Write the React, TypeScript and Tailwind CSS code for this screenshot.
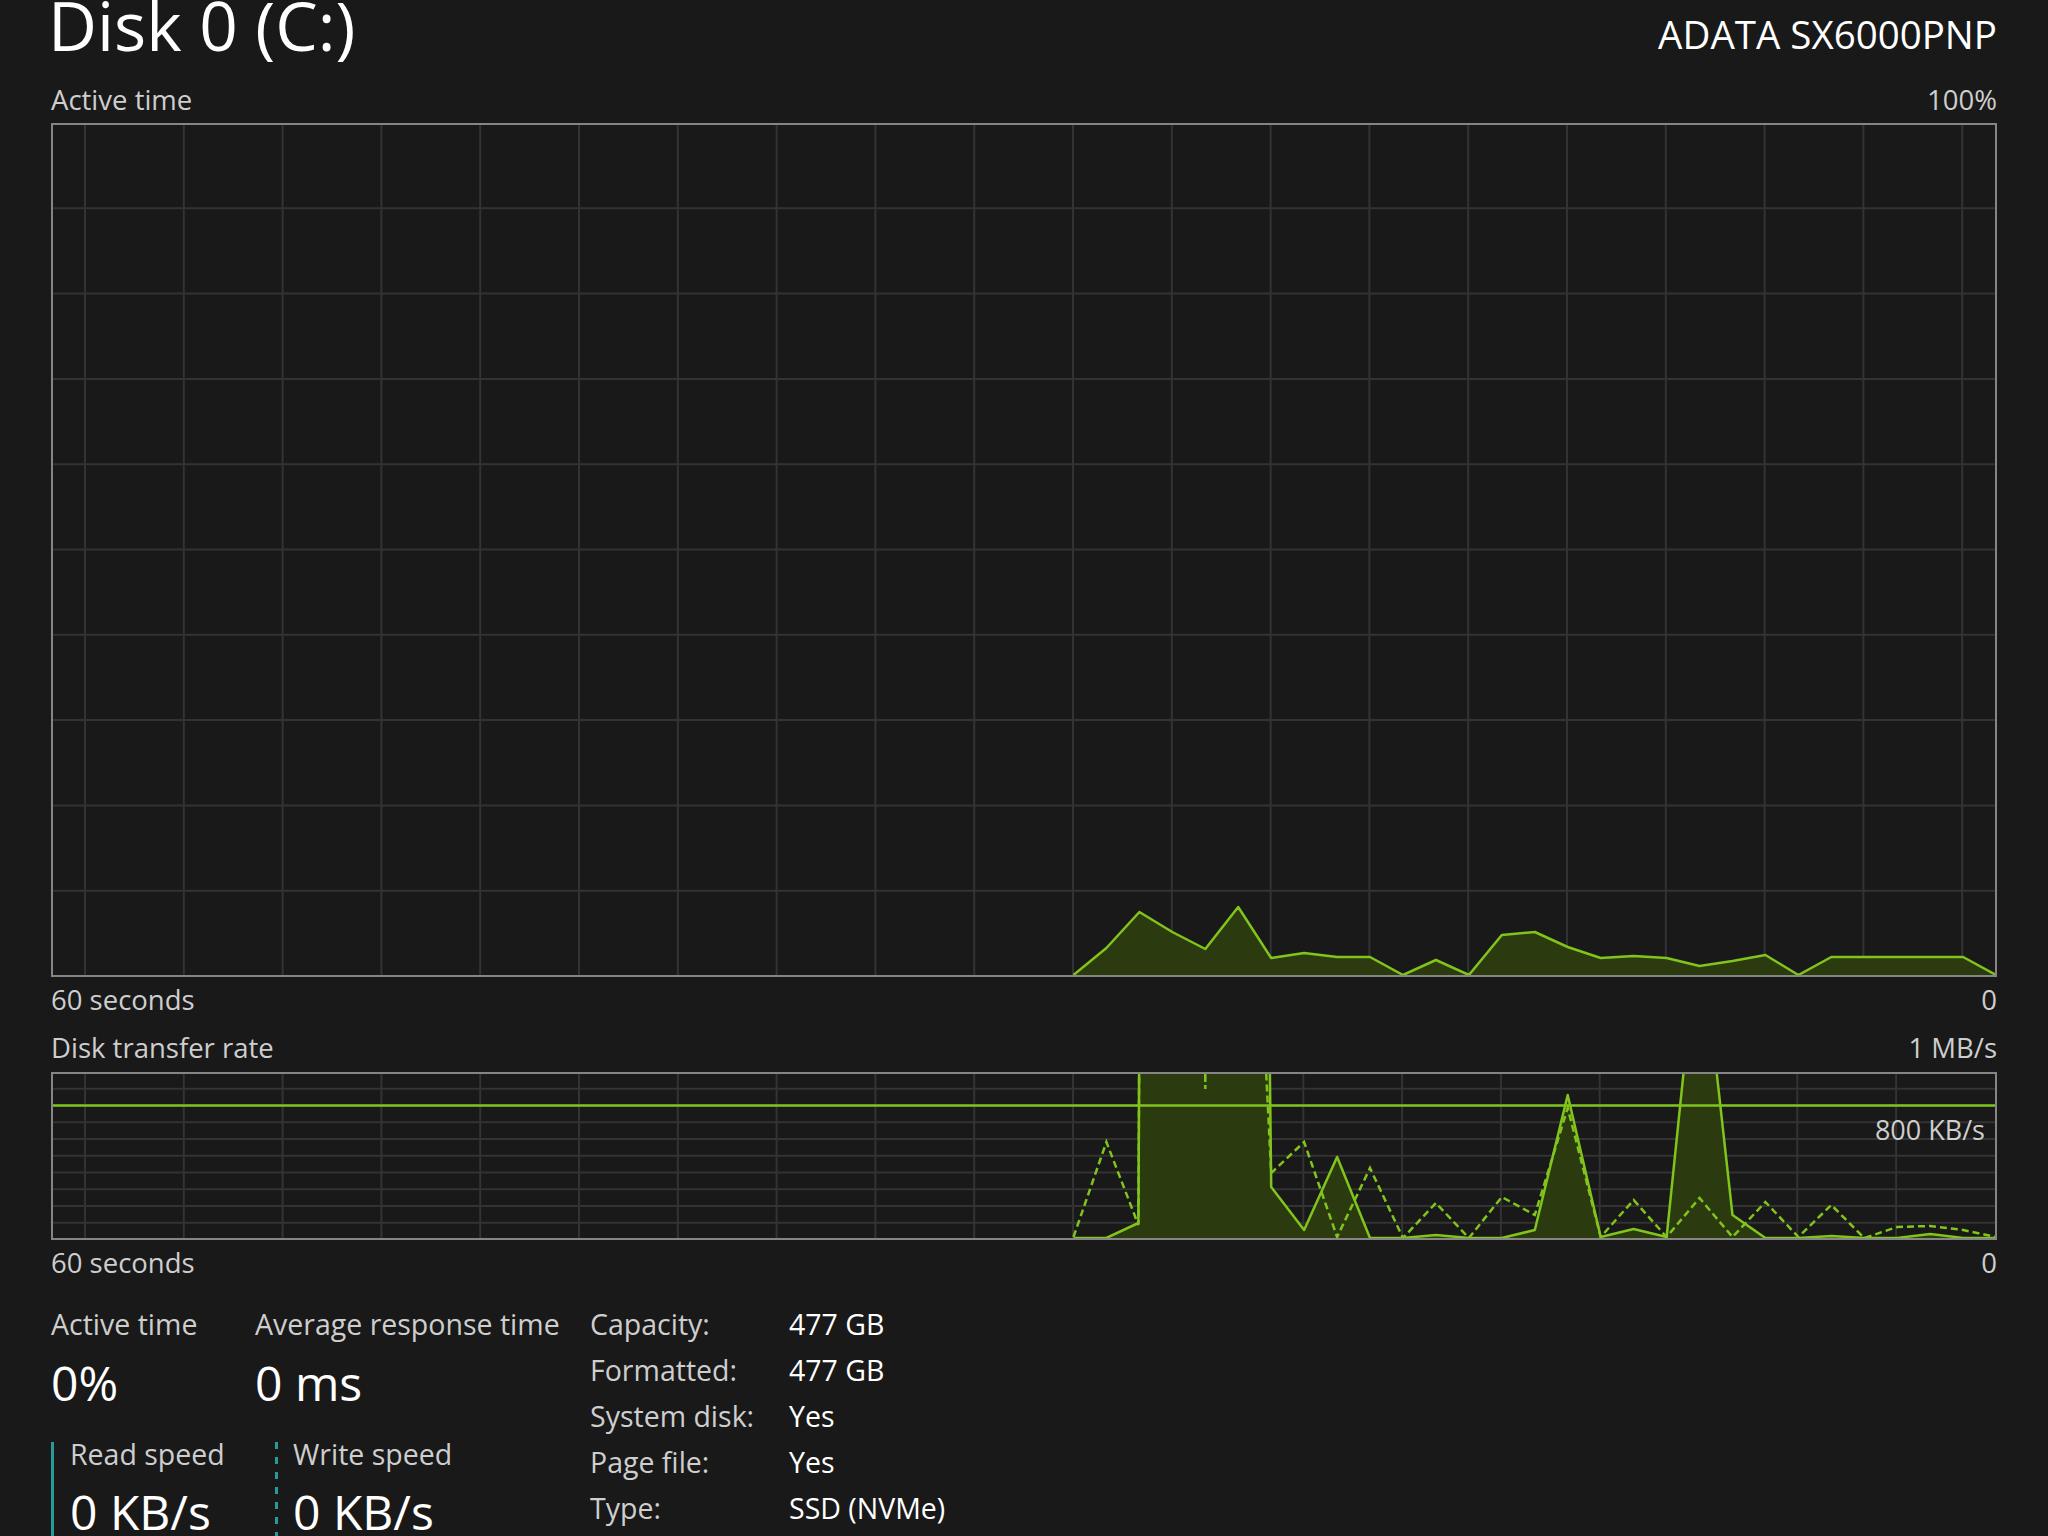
import React from 'react';

const LINE = '#80c41c';
const FILL = '#2c3a10';
const GRID = '#333333';

// x of sample i (60 samples across the chart)
const sx = (i: number, dx = 0) => 52 + i * 32.95 + dx;

type Pt = [number, number, number?];

const toPath = (pts: Pt[], top: number) =>
  pts.map((p, k) => `${k ? 'L' : 'M'}${sx(p[0], p[2] ?? 0).toFixed(1)} ${top + p[1]}`).join(' ');

// active time, y relative to 125
const active: Pt[] = [
  [31, 850], [32, 823], [33, 787], [34, 807], [35, 824], [36, 782], [37, 833], [38, 828],
  [39, 832], [40, 832], [41, 850], [42, 835], [43, 850], [44, 810], [45, 807], [46, 822],
  [47, 833], [48, 831], [49, 833], [50, 841], [51, 836], [52, 830], [53, 850], [54, 832],
  [55, 832], [56, 832], [57, 832], [58, 832], [59, 850],
];

// transfer rate, y relative to 1073
const read: Pt[] = [
  [31, 165], [32, 165], [33, 150, -1], [33, -60], [36, -60], [37, -60, -2], [37, 114], [38, 157],
  [39, 84], [40, 165], [41, 165], [42, 162], [43, 165], [44, 165], [45, 157], [46, 22], [47, 164],
  [48, 156], [49, 164], [50, -155], [51, 142], [52, 165], [53, 165], [54, 163], [55, 165],
  [56, 165], [57, 161], [58, 165], [59, 165],
];

const write: Pt[] = [
  [31, 164], [32, 69], [33, 152, -1], [33, -60], [34, -60], [35, -400, -1], [35, 16], [35, -400, 1],
  [36, -60], [37, -60, -8], [37, 100], [38, 69], [39, 164], [40, 95], [41, 165], [42, 130],
  [43, 165], [44, 124], [45, 142], [46, 35], [47, 164], [48, 127], [49, 164], [50, 125],
  [51, 164], [52, 129], [53, 164], [54, 132], [55, 165], [56, 154], [57, 153], [58, 157], [59, 164],
];

function LabelRow({ left, right }: { left: string; right: string }) {
  return (
    <div className="flex justify-between text-[27.5px] leading-[34px]">
      <span>{left}</span>
      <span>{right}</span>
    </div>
  );
}

function ActiveChart() {
  const vlines = Array.from({ length: 20 }, (_, k) => 85 + k * 98.8);
  const hlines = Array.from({ length: 9 }, (_, j) => 123 + (j + 1) * 85.3);
  const line = toPath(active, 125);
  const area = `${line} L${sx(59)} 976 L${sx(31)} 976 Z`;
  return (
    <svg className="block h-full w-full overflow-hidden" viewBox="53 125 1942 850" preserveAspectRatio="none">
      {vlines.map((x) => (
        <line key={x} x1={x} x2={x} y1={120} y2={980} stroke={GRID} strokeWidth={2} />
      ))}
      {hlines.map((y) => (
        <line key={y} x1={50} x2={2000} y1={y} y2={y} stroke={GRID} strokeWidth={2} />
      ))}
      <path d={area} fill={FILL} />
      <path d={line} fill="none" stroke={LINE} strokeWidth={2.5} strokeLinejoin="round" />
    </svg>
  );
}

function TransferChart() {
  const vlines = [
    ...Array.from({ length: 11 }, (_, k) => 85 + k * 98.8),
    ...Array.from({ length: 8 }, (_, k) => 1204.5 + k * 98.8),
  ];
  const hlines = Array.from({ length: 9 }, (_, j) => 1072 + (j + 1) * 16.75);
  const rl = toPath(read, 1073);
  const area = `${rl} L${sx(59)} 1240 L${sx(31)} 1240 Z`;
  return (
    <svg className="block h-full w-full overflow-hidden" viewBox="53 1074 1942 164" preserveAspectRatio="none">
      {vlines.map((x) => (
        <line key={x} x1={x} x2={x} y1={1070} y2={1242} stroke={GRID} strokeWidth={2} />
      ))}
      {hlines.map((y) => (
        <line key={y} x1={50} x2={2000} y1={y} y2={y} stroke={GRID} strokeWidth={2} />
      ))}
      <path d={area} fill={FILL} />
      <line x1={50} x2={2000} y1={1105.5} y2={1105.5} stroke={LINE} strokeWidth={2.5} />
      <path d={toPath(write, 1073)} fill="none" stroke={LINE} strokeWidth={2.5} strokeDasharray="7 4" />
      <path d={rl} fill="none" stroke={LINE} strokeWidth={2.5} strokeLinejoin="round" />
    </svg>
  );
}

const info: [string, string][] = [
  ['Capacity:', '477 GB'],
  ['Formatted:', '477 GB'],
  ['System disk:', 'Yes'],
  ['Page file:', 'Yes'],
  ['Type:', 'SSD (NVMe)'],
];

export default function App() {
  return (
    <div className="h-[1536px] w-[2048px] overflow-hidden bg-[#191919] px-[51px] font-['Open_Sans',sans-serif] text-[#cecece]">
      <div className="flex h-[83px] items-start justify-between">
        <div className="-ml-[3px] -mt-[7px] text-[67.5px] leading-[64px] text-white">Disk 0 (C:)</div>
        <div className="mt-[17px] text-[38.5px] leading-[35px] text-white">ADATA SX6000PNP</div>
      </div>
      <LabelRow left="Active time" right="100%" />
      <div className="mt-[6px] h-[854px] border-2 border-[#858585]">
        <ActiveChart />
      </div>
      <div className="mt-[6px]">
        <LabelRow left="60 seconds" right="0" />
      </div>
      <div className="mt-[14px]">
        <LabelRow left="Disk transfer rate" right="1 MB/s" />
      </div>
      <div className="relative mt-[7px] h-[168px] border-2 border-[#858585]">
        <TransferChart />
        <span className="absolute right-[10px] top-[39px] text-[27px] leading-[34px]">800 KB/s</span>
      </div>
      <div className="mt-[6px]">
        <LabelRow left="60 seconds" right="0" />
      </div>

      <div className="flex items-start">
        <div className="mt-[27px] w-[539px]">
          <div className="flex">
            <div className="w-[204px]">
              <div className="text-[28.5px] leading-[34px]">Active time</div>
              <div className="mt-[12px] text-[48px] leading-[60px] text-white">0%</div>
            </div>
            <div>
              <div className="text-[28.5px] leading-[34px]">Average response time</div>
              <div className="mt-[12px] text-[48px] leading-[60px] text-white">0 ms</div>
            </div>
          </div>
          <div className="mt-[24px] flex">
            <div className="flex w-[224px]">
              <div className="mt-[5px] w-[3px] self-stretch bg-[#2a9a98]" />
              <div className="ml-[16px]">
                <div className="text-[28.5px] leading-[34px]">Read speed</div>
                <div className="mt-[11px] text-[48px] leading-[60px] text-white">0 KB/s</div>
              </div>
            </div>
            <div className="flex">
              <div className="mt-[5px] w-[3px] self-stretch bg-[linear-gradient(to_bottom,#2a9a98_50%,transparent_50%)] bg-[length:3px_15px]" />
              <div className="ml-[15px]">
                <div className="text-[28.5px] leading-[34px]">Write speed</div>
                <div className="mt-[11px] text-[48px] leading-[60px] text-white">0 KB/s</div>
              </div>
            </div>
          </div>
        </div>
        <div className="mt-[21px] grid grid-cols-[199px_auto] text-[28.5px] leading-[46px]">
          {info.map(([k, v]) => (
            <React.Fragment key={k}>
              <div>{k}</div>
              <div className="text-white">{v}</div>
            </React.Fragment>
          ))}
        </div>
      </div>
    </div>
  );
}
